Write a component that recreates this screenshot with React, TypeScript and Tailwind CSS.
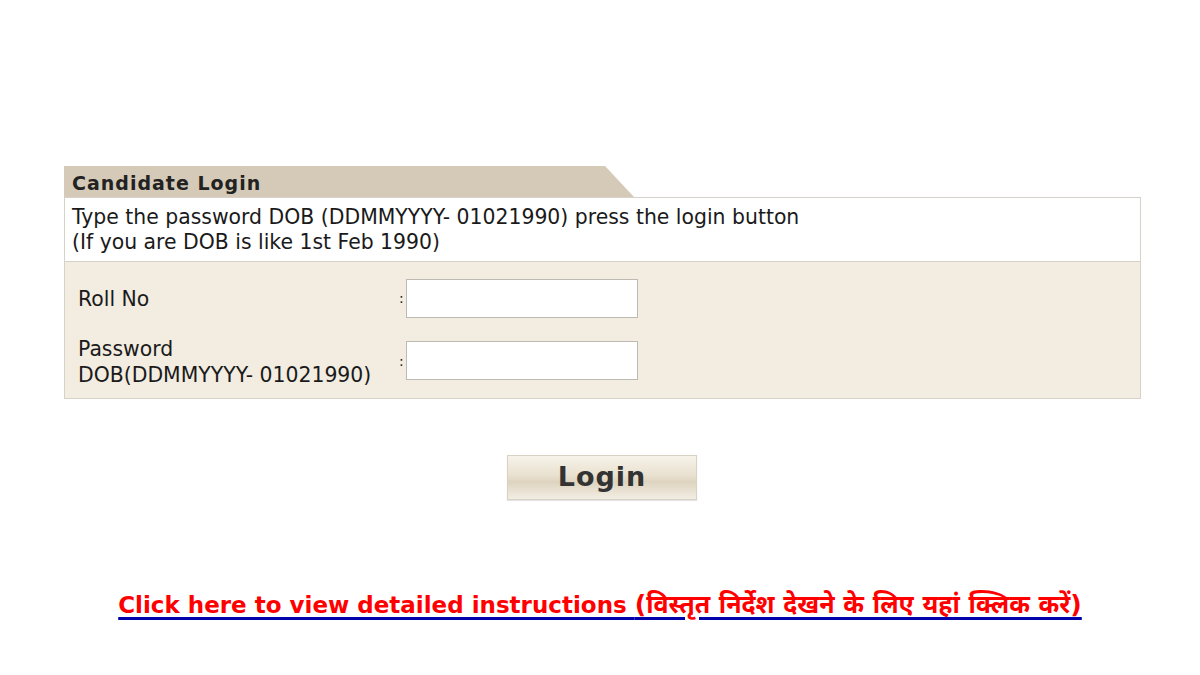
export default function App() {
  return (
    <div className="w-[1200px] h-[675px] bg-white font-['DejaVu_Sans','Verdana',sans-serif] text-[#1a1a1a]">
      <div className="pt-[166px] pl-[64px]">
        {/* tab header */}
        <div className="w-[570px] h-[31px] bg-[#d5cab7] [clip-path:polygon(0_0,541px_0,100%_100%,0_100%)] flex items-center pl-[8px]">
          <span className="text-[19px] font-bold tracking-[1px] text-[#222] mt-[3px]">Candidate Login</span>
        </div>
        <div className="w-[1077px] border border-[#d6d2ca]">
          <div className="bg-white px-[7px] pt-[7px] pb-[6px] text-[20.4px] leading-[25px] border-b border-[#d6d2ca]">
            <div>Type the password DOB (DDMMYYYY- 01021990) press the login button</div>
            <div>(If you are DOB is like 1st Feb 1990)</div>
          </div>
          <div className="bg-[#f2ece1] pl-[13px] pt-[17px] pb-[10px] text-[20.4px]">
            <div className="flex items-center h-[39px]">
              <div className="w-[321px] pt-[2px]">Roll No</div>
              <span className="w-[7px] text-[14px]">:</span>
              <input className="w-[232px] h-[39px] bg-white border border-[#bdbab4] outline-none" />
            </div>
            <div className="flex items-start mt-[18px]">
              <div className="w-[321px] leading-[26px]">
                <div>Password</div>
                <div>DOB(DDMMYYYY- 01021990)</div>
              </div>
              <div className="flex items-center mt-[5px]">
                <span className="w-[7px] text-[14px] mt-[2px]">:</span>
                <input className="w-[232px] h-[39px] bg-white border border-[#bdbab4] outline-none" />
              </div>
            </div>
          </div>
        </div>
      </div>
      <div className="flex justify-center mt-[56px] pl-[4px]">
        <button className="w-[190px] h-[45px] border border-[#d8d2c4] bg-[linear-gradient(to_bottom,#f7f3ea_0%,#e9e1d0_45%,#ddd3bf_60%,#f3eee4_100%)] text-[27px] font-bold text-[#333] font-['DejaVu_Sans',sans-serif] tracking-[1px] shadow-[0_1px_1px_rgba(0,0,0,0.1)]">
          Login
        </button>
      </div>
      <div className="flex justify-center mt-[86px]">
        <a href="#" className="text-[23px] font-bold text-[#ff0000] underline decoration-[#0000aa] decoration-[2.5px] underline-offset-[4px] font-['DejaVu_Sans','Noto_Sans',sans-serif]">
          Click here to view detailed instructions <span className="text-[25px]">(विस्तृत निर्देश देखने के लिए यहां क्लिक करें)</span>
        </a>
      </div>
    </div>
  );
}
